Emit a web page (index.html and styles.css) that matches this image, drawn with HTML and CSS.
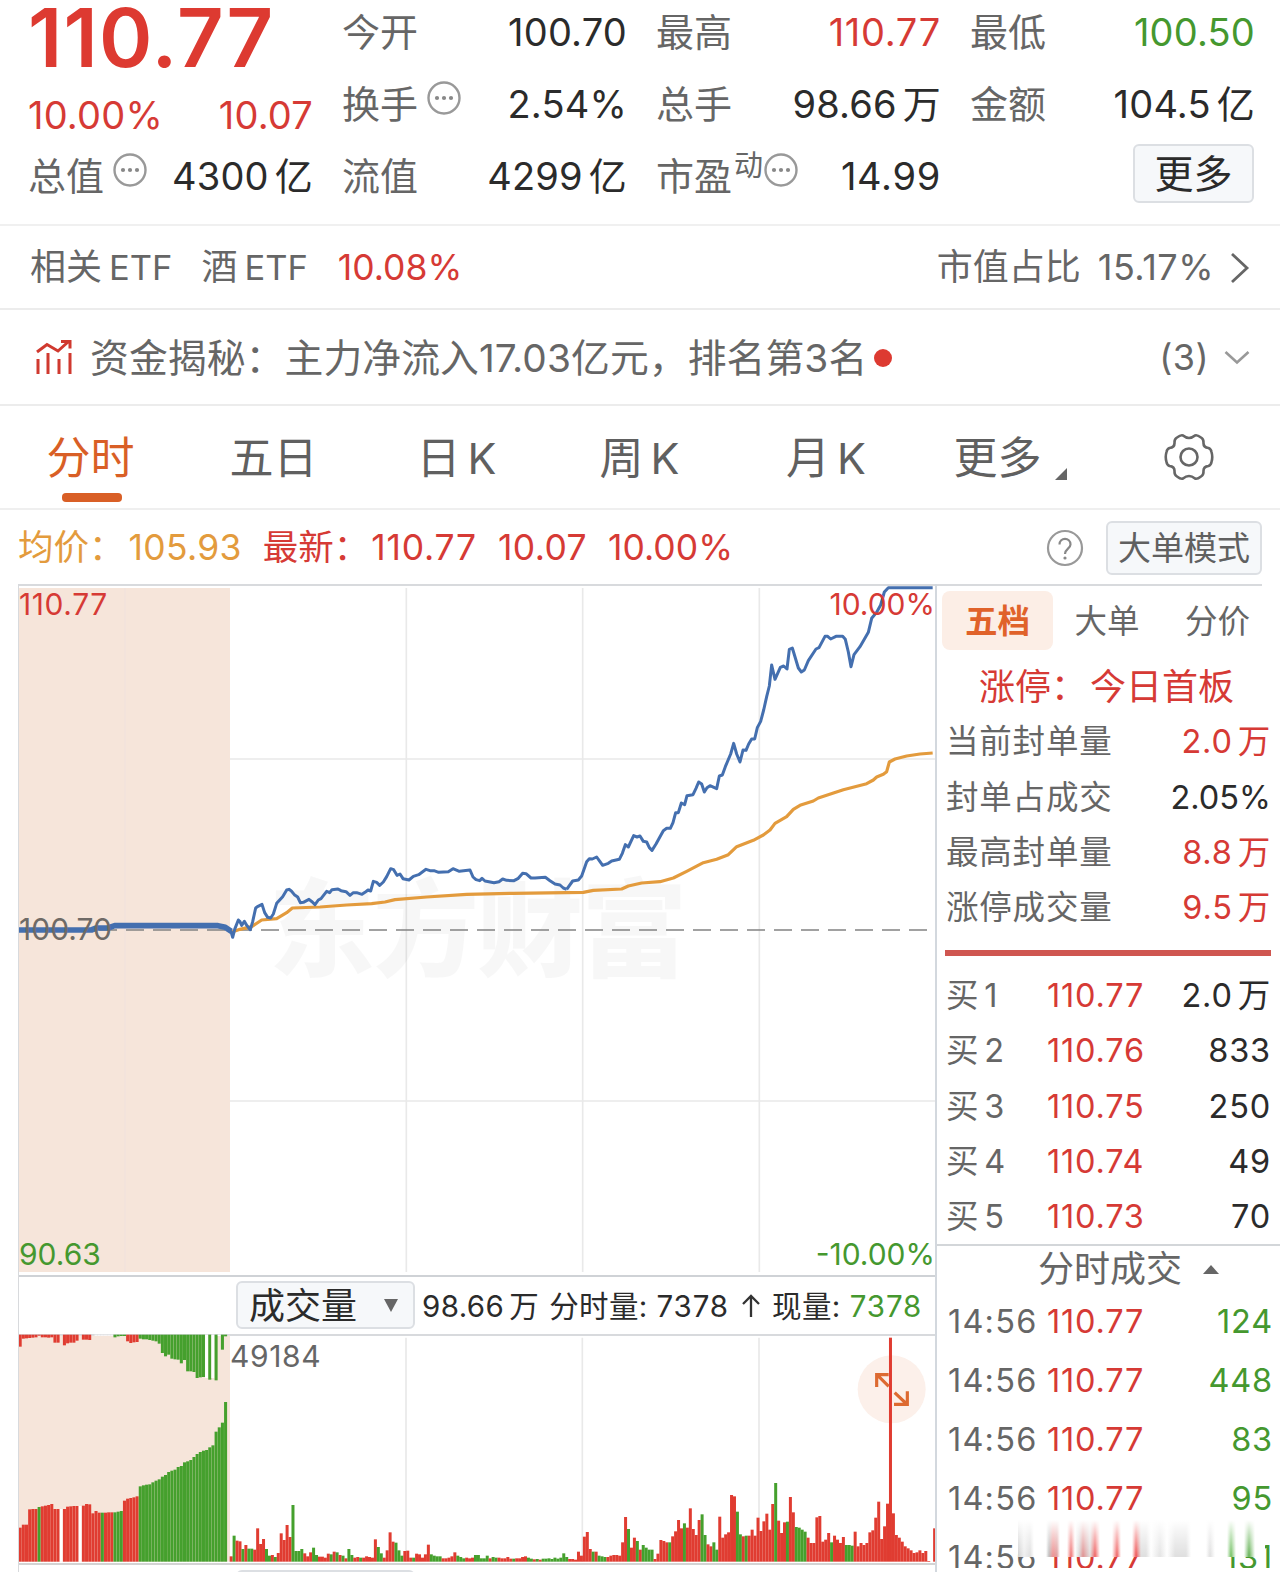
FILE: index.html
```html
<!DOCTYPE html>
<html lang="zh-CN">
<head>
<meta charset="utf-8">
<title>分时行情</title>
<link rel="stylesheet" href="styles.css">
</head>
<body>
<svg width="0" height="0" class="defs">
  <symbol id="dots" viewBox="0 0 34 34"><circle cx="17" cy="17" r="15.5" fill="none" stroke="#999" stroke-width="2.4"/><g fill="#888"><circle cx="10" cy="17" r="2.1"/><circle cx="17" cy="17" r="2.1"/><circle cx="24" cy="17" r="2.1"/></g></symbol>
</svg>
<main class="page">
  <section class="quote">
    <div class="col">
      <div class="price">110.77</div>
      <div class="cell change red"><span>10.00%</span><span>10.07</span></div>
      <div class="cell"><span class="label">总值<svg class="dots"><use href="#dots"/></svg></span><span>4300<i>亿</i></span></div>
    </div>
    <div class="col">
      <div class="cell"><span class="label">今开</span><span>100.70</span></div>
      <div class="cell"><span class="label">换手<svg class="dots"><use href="#dots"/></svg></span><span>2.54%</span></div>
      <div class="cell"><span class="label">流值</span><span>4299<i>亿</i></span></div>
    </div>
    <div class="col">
      <div class="cell"><span class="label">最高</span><span class="red wide">110.77</span></div>
      <div class="cell"><span class="label">总手</span><span>98.66<i>万</i></span></div>
      <div class="cell"><span class="label">市盈<small>动</small><svg class="dots tight"><use href="#dots"/></svg></span><span class="wide">14.99</span></div>
    </div>
    <div class="col">
      <div class="cell"><span class="label">最低</span><span class="green">100.50</span></div>
      <div class="cell"><span class="label">金额</span><span>104.5<i>亿</i></span></div>
      <div class="cell end"><button class="more">更多</button></div>
    </div>
  </section>

  <section class="etf">
    <span>相关<i>ETF</i></span><span class="etf-name">酒<i>ETF</i></span><span class="red pct">10.08%</span>
    <span class="share">市值占比</span><span class="ratio">15.17%</span>
    <svg class="arrow" viewBox="0 0 20 32"><path d="M2 2 17 16 2 30" fill="none" stroke="#666" stroke-width="2.8"/></svg>
  </section>

  <section class="fund">
    <svg class="trend" viewBox="0 0 38 36" fill="none" stroke="#d0392f" stroke-width="3"><path d="M2 12 12 4.500 23 11 33 2M26 1.500h9v7M3 19v15M13 13v21M24 19v15M35 13v21"/></svg>
    <span class="news">资金揭秘：主力净流入17.03亿元，排名第3名</span><b class="dot"></b>
    <span class="count">(3)</span>
    <svg class="down" viewBox="0 0 26 16"><path d="M1.500 2 13 12.500 24.500 2" fill="none" stroke="#999" stroke-width="2.600"/></svg>
  </section>

  <nav class="tabs">
    <span class="on">分时</span><span>五日</span><span>日<i>K</i></span><span>周<i>K</i></span><span class="month">月<i>K</i></span><span class="drop">更多</span>
    <span><svg class="gear" viewBox="-25 -25 50 50" fill="none" stroke="#666" stroke-width="2.600" stroke-linejoin="round"><circle r="8.500"/><path d="M-6-21.500Q0-16.500 6-21.500Q8-22.500 12-19.500Q14.500-18 14.500-15Q14-9.500 19.500-9Q22-8 22.500-5Q24 0 22.500 5Q22 8 19.500 9Q14 9.500 14.500 15Q14.500 18 12 19.500Q8 22.500 6 21.500Q0 16.500-6 21.500Q-8 22.500-12 19.500Q-14.500 18-14.500 15Q-14 9.500-19.500 9Q-22 8-22.500 5Q-24 0-22.500-5Q-22-8-19.500-9Q-14-9.500-14.500-15Q-14.500-18-12-19.500Q-8-22.500-6-21.500Z"/></svg></span>
  </nav>

  <section class="summary">
    <span class="avg">均价：</span><span class="avg v1">105.93</span><span class="red s2">最新：</span><span class="red v2">110.77</span><span class="red v3">10.07</span><span class="red v4">10.00%</span>
    <svg class="help" viewBox="0 0 38 38"><circle cx="19" cy="19" r="17" fill="none" stroke="#999" stroke-width="2.200"/><path d="M13.500 15.500c0-7.500 11-7.500 11 0 0 4-5.500 4.500-5.500 9.500" fill="none" stroke="#888" stroke-width="2.200"/><circle cx="19" cy="29" r="1.600" fill="#888"/></svg>
    <button class="mode">大单模式</button>
  </section>

  <section class="body">
    <div class="left">
      <div class="chart">
        <svg viewBox="0 0 2757 2073" width="919" height="691">
          <rect x="0" y="12" width="636" height="2052" fill="#f6e5da"/>
          <path d="M321 12V2064" stroke="#f2e3dc" stroke-width="4"/>
          <path d="M1165 12V2064M1694 12V2064M2224 12V2064M636 525H2757M636 1551H2757" stroke="#e9e9e9" stroke-width="5" fill="none"/>
          <text class="mark" x="752" y="1153" textLength="1256">东方财富</text>
          <path d="M0 1038H2757" stroke="#828282" stroke-width="5" stroke-dasharray="54 27"/>
          <g fill="none" stroke-linejoin="round">
            <path stroke="#e39b3d" stroke-width="9.500" d="M642 1044 666 1036 701 1028 731 1008 776 1004 806 986 823 972 906 969 986 963 1061 959 1101 954 1131 947 1226 939 1346 931 1486 928 1696 925 1726 919 1811 915 1831 906 1871 897 1926 893 1966 882 2006 862 2056 836 2096 826 2131 812 2156 788 2206 769 2236 753 2256 738 2271 718 2306 698 2326 676 2346 664 2386 651 2401 642 2476 617 2546 599 2566 588 2576 579 2596 571 2606 563 2614 534 2631 525 2666 516 2706 510 2744 507"/>
            <path stroke="#446faf" stroke-width="17" d="M2 1038H220L235 1032H270L290 1025H600L622 1030 640 1042"/>
            <g transform="translate(606 -12)"><path stroke="#446faf" stroke-width="9" d="M25 1048 33 1055 38 1072 44 1048 55 1020 60 1025 65 1036 73 1024 80 1036 91 1049 98 1025 107 984 114 979 126 973 134 998 143 1012 152 1014 160 1002 170 970 188 950 200 930 207 928 214 933 223 944 233 951 241 968 250 967 267 958 277 966 285 974 295 960 303 956 320 934 329 938 336 929 354 927 363 932 378 935 390 946 400 938 410 938 426 943 435 937 444 930 452 933 460 904 470 907 479 916 490 906 500 890 512 866 521 869 531 886 540 882 549 896 567 900 580 889 596 884 618 868 630 872 642 872 656 877 685 875 699 866 718 874 750 870 759 891 768 899 779 902 786 895 795 903 822 908 837 905 848 897 860 901 882 902 895 895 908 880 918 881 933 894 945 894 976 892 990 902 1005 912 1020 915 1030 924 1040 928"/></g>
            <g transform="translate(1626 -12)"><path stroke="#446faf" stroke-width="9" d="M20 928 38 903 55 900 65 888 80 845 88 836 97 837 110 831 120 845 128 856 145 850 155 843 178 838 187 820 196 794 205 801 221 767 231 771 240 768 250 784 260 786 268 803 276 811 288 792 300 770 310 752 320 745 331 745 339 728 347 698 355 698 364 669 374 674 381 647 399 644 408 625 416 606 425 612 433 636 441 623 450 617 470 626 478 588 487 585 496 560 512 522 521 490 530 522 540 546 549 510 558 511 566 492 575 477 584 477 592 443 602 424 611 390 620 350 628 318 635 255 645 298 661 262 671 258 681 267 688 208 697 204 706 234 715 264 724 276 733 270 745 242 768 207 777 203 795 169 803 169 812 177 828 169 848 169 856 178 865 216 873 260 882 224 900 200 925 157 935 115 950 97 962 75 973 36 985 23H1118"/></g>
          </g>
        </svg>
        <span class="tag tl red">110.77</span><span class="tag tr red">10.00%</span><span class="tag ml">100.70</span><span class="tag bl green">90.63</span><span class="tag br green">-10.00%</span>
      </div>
      <div class="volbar">
        <button class="volbtn">成交量<svg viewBox="0 0 14 13"><path d="M0 0H14L7 13Z" fill="#666"/></svg></button>
        <span>98.66<i>万</i></span><span class="g2">分时量: <em>7378</em></span><svg class="up" viewBox="0 0 20 24"><path d="M10 23V2M2 10 10 2 18 10" fill="none" stroke="#333" stroke-width="2.300"/></svg><span>现量:</span><span class="green now">7378</span>
      </div>
      <div class="volume">
        <svg viewBox="55 283 2757 687" width="919" height="229">
          <rect x="55" y="288" width="636" height="678" fill="#f6e5da"/>
          <path d="M1219 294V966M1748 294V966M2278 294V966" stroke="#e9e9e9" stroke-width="5"/>
          <circle cx="2676" cy="449" r="102" fill="#fcf0ea"/>
          <g id="bars"></g>
          <path d="M2631 442V405H2667M2634 407 2667 440M2685 459 2721 493M2723 455V494H2683" fill="none" stroke="#dd6a31" stroke-width="9.500"/>
        </svg>
        <span class="max">49184</span>
      </div>
      <div class="nextbar"><span></span></div>
    </div>

    <aside class="side">
      <div class="subtabs"><b>五档</b><span>大单</span><span>分价</span></div>
      <div class="limit red">涨停：<span>今日首板</span></div>
      <div class="row"><span class="label">当前封单量</span><span class="red">2.0<i>万</i></span></div>
      <div class="row"><span class="label">封单占成交</span><span class="tightnum">2.05%</span></div>
      <div class="row"><span class="label">最高封单量</span><span class="red">8.8<i>万</i></span></div>
      <div class="row"><span class="label">涨停成交量</span><span class="red">9.5<i>万</i></span></div>
      <div class="rule"></div>
      <div class="row bid"><span class="label">买<i>1</i></span><span class="red">110.77</span><span>2.0<i>万</i></span></div>
      <div class="row bid"><span class="label">买<i>2</i></span><span class="red">110.76</span><span>833</span></div>
      <div class="row bid"><span class="label">买<i>3</i></span><span class="red">110.75</span><span>250</span></div>
      <div class="row bid"><span class="label">买<i>4</i></span><span class="red">110.74</span><span>49</span></div>
      <div class="row bid"><span class="label">买<i>5</i></span><span class="red">110.73</span><span>70</span></div>
      <div class="deals">分时成交<svg viewBox="0 0 16 9"><path d="M0 9 8 0 16 9Z" fill="#666"/></svg></div>
      <div class="trades">
        <div class="row trade"><span class="label">14:56</span><span class="red">110.77</span><span class="green">124</span></div>
        <div class="row trade"><span class="label">14:56</span><span class="red">110.77</span><span class="green">448</span></div>
        <div class="row trade"><span class="label">14:56</span><span class="red">110.77</span><span class="green">83</span></div>
        <div class="row trade"><span class="label">14:56</span><span class="red">110.77</span><span class="green">95</span></div>
        <div class="row trade"><span class="label">14:56</span><span class="red">110.77</span><span class="green">131</span></div>
        <div class="smudge"></div>
      </div>
    </aside>
  </section>
</main>
<script src="bars.js"></script>
</body>
</html>
```
FILE: bars.js
```js
// Each entry is colour (r, g, or w for an empty slot) followed by bar height.
const colours = { r: '#e03c31', g: '#45a02d', w: '#ffffff' };
const layer = document.getElementById('bars');

function draw(list, x0, pitch, width, base, down) {
  list.trim().split(/\s+/).forEach((entry, i) => {
    const h = Number(entry.slice(1));
    if (!h) return;
    const bar = document.createElementNS('http://www.w3.org/2000/svg', 'rect');
    bar.setAttribute('x', x0 + pitch * i);
    bar.setAttribute('y', down ? base : base - h);
    bar.setAttribute('width', width);
    bar.setAttribute('height', h);
    bar.setAttribute('fill', colours[entry[0]]);
    layer.appendChild(bar);
  });
}

const auctionMatched = `r102 r111 r111 r157 r158 r158 g164 r166 r168 r170 r173 r158 r158 w158 r158 r165 r166 r167 r167 w167
r168 r173 r172 r145 r152 r147 g147 r147 r148 r148 g148 g150 g152 r183 r189 r191 r193 r196 g226 g229 g231 g232 g238 g243 g247
g255 g260 g269 g273 g276 g284 g287 g298 g301 g305 g314 g323 g329 g333 g335 g343 g349 g390 g403 g417 g479`;
const auctionUnmatched = `r36 r12 r11 r10 r9 r8 r3 r8 r8 r9 r8 r24 r24 w0 r32 r26 r24 r24 r18 w0 r15 r15 r16 w0 w3 w3 w3 w3 w3 w3
g8 g5 g4 g4 r20 r25 r23 r22 g12 g14 g14 g16 g18 g20 g27 g55 g65 g60 g72 g74 g75 g86 g76 g110 g110 g112 g130 g128 g127 w130
g135 w130 g137 w4 g45 g5`;
const traded = `r16 g78 r63 r61 g38 r50 g39 g39 r36 r100 r53 r68 g38 g18 r20 g14 r26 r85 r65 r110 r74 g170 g32 g32 g38 r25 r16 r28
g42 g20 r15 r15 r12 r24 g22 r30 g28 r20 g18 r10 g38 g20 r12 r14 g12 r12 r16 r14 r12 r67 g44 g25 r12 r34 r88 r60 g57 g34 g18 r32
r33 r12 g12 r24 r22 r12 r22 r51 g22 g18 g16 g16 r10 r10 r12 r16 r28 g18 g14 g10 r12 r10 r12 g20 g20 g10 g10 g18 r10 g14 g12 r12
r10 r10 r14 r9 g9 r10 r10 r14 r16 g12 g9 r7 g8 r6 g9 g9 g10 g8 g12 g9 g12 g25 g14 r8 r8 r6 r30 r18 r75 r89 r38 g30 r30 g18 g16
g14 r14 r18 r20 r20 r18 r58 r134 g98 r42 r72 g62 r36 g50 g42 g36 g36 r8 r24 r65 r62 r58 g58 r76 r91 r125 r100 g115 r102 r160 r98
r80 r125 g142 g80 r52 r46 g58 g36 r135 r72 r82 r88 r200 r196 g150 g82 r76 g78 r78 r96 r78 r132 r92 r121 r144 r96 r173 g236 r123
r86 r118 g120 r194 r148 g104 g102 g96 g90 r72 r56 r56 r133 r137 r60 r66 r86 g58 r78 r66 r56 r74 g50 g50 g48 r90 r46 r56 r50
r56 r88 r94 r132 r180 r68 r106 r174 r672 r145 r80 r72 r60 r46 r40 r34 r26 r28 r34 r26 r32 r2 w0 r100`;

draw(auctionMatched, 57, 9.48, 9.1, 966, false);
draw(auctionUnmatched, 57, 9.48, 9.1, 285, true);
draw(traded, 690, 8.83, 9, 966, false);
```
FILE: styles.css
```css
* { box-sizing: border-box; }
body { margin: 0; background: #fff; color: #2b2b2b; font-family: Inter, "Noto Sans CJK SC", sans-serif; line-height: 1.2; }
i, em { font-style: normal; }
button { font-family: inherit; padding: 0; background: #f6f8fa; border: 2px solid #dcdfe3; border-radius: 6px; color: #2b2b2b; }
svg { display: block; flex: none; }
.defs { position: absolute; }
.page { width: 1280px; height: 1572px; overflow: hidden; display: flex; flex-direction: column; }
.page > * { flex: none; }
.red { color: #d63a35; }
.green { color: #45982f; }
.label { color: #666; }

.quote { height: 226px; border-bottom: 2px solid #f0f0f0; padding: 1px 26px 0 28px; display: grid; grid-template-columns: repeat(4, 285px); column-gap: 29px; font-size: 38px; }
.cell { height: 72px; display: flex; justify-content: space-between; align-items: center; white-space: nowrap; }
.cell:first-child { height: 68px; padding-bottom: 4px; }
.cell i { margin-left: 6px; }
.cell > span { letter-spacing: .2px; }
.cell .label { display: flex; align-items: center; letter-spacing: 0; }
.cell > .wide { letter-spacing: .7px; }
.label small { font-size: 29px; margin: -22px 0 0 2px; }
.dots { width: 34px; height: 34px; margin: -15px 0 0 9px; }
.dots.tight { margin-left: 1px; }
.price { height: 76px; margin: -1px 0 5px; line-height: 76px; font-size: 81px; font-weight: 600; color: #dd3a31; letter-spacing: 1.3px; }
.change { height: 69px; }
.change + .cell { height: 54px; }
.cell.end { justify-content: flex-end; }
.more { width: 121px; height: 59px; font-size: 39px; line-height: 55px; margin: -8px 1px 0 0; }

.etf { height: 84px; border-bottom: 2px solid #ececec; padding: 2px 30px 0; display: flex; align-items: center; font-size: 36px; color: #666; white-space: nowrap; }
.etf i { margin-left: 7px; font-size: 34.5px; }
.etf-name { margin-left: 29px; }
.pct { margin-left: 30px; font-size: 35.5px; }
.share { margin-left: auto; }
.ratio { margin-left: 17px; letter-spacing: .5px; }
.arrow { width: 20px; height: 32px; margin-left: 16px; }

.fund { height: 96px; border-bottom: 2px solid #ececec; padding: 2px 30px 0 35px; display: flex; align-items: center; font-size: 38.8px; color: #666; white-space: nowrap; }
.trend { width: 38px; height: 36px; margin: -1px 17px 0 0; }
.news { width: 776px; letter-spacing: .1px; }
.dot { width: 18px; height: 18px; border-radius: 50%; background: #dd3a31; margin: -1px 0 0 8px; }
.count { margin-left: auto; font-size: 36px; letter-spacing: .4px; }
.down { width: 26px; height: 16px; margin-left: 15px; }

.tabs { height: 104px; border-bottom: 2px solid #efefef; display: grid; grid-template-columns: repeat(7, 183px); align-items: center; justify-items: center; font-size: 44px; color: #606060; }
.tabs > span { position: relative; padding-top: 2px; margin-left: -2px; }
.tabs i { margin-left: 7px; font-size: 43px; }
.tabs .on { color: #d95f26; }
.tabs .on::after { content: ""; position: absolute; left: 50%; top: 63px; width: 60px; height: 9px; margin-left: -29px; border-radius: 4px; background: #d95f26; }
.tabs .month { margin-left: 5px; }
.drop { left: -8px; }
.drop::after { content: ""; position: absolute; right: -25px; bottom: 4px; border-style: solid; border-width: 0 0 12px 12px; border-color: transparent transparent #666; }
.gear { width: 50px; height: 50px; margin-top: -2px; }

.summary { height: 74px; padding: 2px 18px 0; display: flex; align-items: center; font-size: 35.5px; white-space: nowrap; }
.avg { color: #e39b3d; }
.v1 { margin-left: 4px; letter-spacing: .3px; }
.v2 { margin-left: 2px; letter-spacing: .8px; }
.s2, .v3, .v4 { margin-left: 21px; }
.v3 { letter-spacing: .4px; }
.help { width: 38px; height: 38px; margin-left: auto; }
.mode { width: 156px; height: 54px; margin: -1px 0 0 22px; font-size: 33px; line-height: 50px; color: #606060; }

.body { display: grid; grid-template-columns: 919px 343px; margin-left: 18px; height: 988px; }
.left { height: 988px; overflow: hidden; border-left: 1px solid #d8dadd; border-right: 2px solid #d3d8de; }
.chart { position: relative; height: 693px; border-top: 2px solid #d8dadd; border-bottom: 2px solid #cfd2d6; }
.chart > svg { margin: -2px 0 0 -1px; }
.mark { font: 900 318px "Noto Sans CJK SC", sans-serif; fill: #000; fill-opacity: .03; }
.tag { position: absolute; font-size: 30px; line-height: 36px; }
.tl { left: 0; top: 0; letter-spacing: .6px; }
.tr { right: 0; top: 0; }
.ml { left: 0; top: 325px; color: #6f6a66; }
.bl { left: 0; bottom: 3px; }
.br { right: 0; bottom: 3px; }
.volbar { height: 57px; display: flex; align-items: center; padding-left: 217px; font-size: 29.5px; letter-spacing: .4px; white-space: nowrap; }
.volbar > span { padding-top: 2px; }
.volbar i { margin-left: 5px; }
.volbar em, .now { letter-spacing: .9px; }
.volbtn { width: 179px; height: 48px; margin: -1px 7px 0 0; font-size: 36px; line-height: 40px; display: flex; align-items: center; justify-content: space-between; padding: 2px 15px 0 11px; }
.volbtn svg { width: 14px; height: 13px; margin-top: -2px; }
.g2 { margin-left: 10px; }
.up { width: 20px; height: 24px; margin: 0 11px 0 12px; }
.now { margin-left: 9px; }
.volume { position: relative; height: 231px; border-top: 2px solid #d8dadd; border-bottom: 2px solid #d3d3d3; }
.volume > svg { margin: -2px 0 0 -1px; }
.max { position: absolute; left: 211px; top: 2px; font-size: 30px; line-height: 36px; letter-spacing: .6px; color: #666; }
.nextbar { padding: 5px 0 0 217px; }
.nextbar span { display: block; width: 179px; height: 48px; background: #f6f8fa; border: 2px solid #dcdfe3; border-radius: 6px; }

.side { font-size: 32.5px; letter-spacing: .8px; white-space: nowrap; height: 984px; overflow: hidden; }
.subtabs { height: 68px; margin-right: 18px; border-top: 2px solid #d8dadd; padding: 5px 0 0 5px; display: flex; line-height: 62px; color: #666; letter-spacing: 0; }
.subtabs b { flex: none; width: 111px; height: 59px; border-radius: 8px; background: #fceee6; color: #e0622a; text-align: center; }
.subtabs span { flex: none; width: 108px; text-align: center; }
.subtabs span + span { width: 113px; }
.limit { height: 61px; line-height: 70px; font-size: 36px; letter-spacing: 0; padding-left: 42px; }
.limit span { margin-left: 3px; }
.row { height: 55.4px; display: flex; align-items: center; justify-content: space-between; padding: 2px 9px 0 9px; }
.row i { margin-left: 5px; }
.tightnum { letter-spacing: 0; }
.rule { height: 6px; margin: 15.4px 9px 10.600px 8px; background: #cf5650; }
.bid, .trade { display: grid; grid-template-columns: 101px 1fr auto; }
.deals { height: 48px; border-top: 2px solid #d3d6d9; padding-top: 2px; display: flex; align-items: center; font-size: 36px; letter-spacing: 0; color: #666; padding-left: 101px; }
.deals svg { width: 16px; height: 9px; margin-left: 21px; }
.trades { position: relative; }
.trade { height: 58.8px; padding-right: 7px; padding-left: 11px; grid-template-columns: 99px 1fr auto; }
.trade .label { letter-spacing: 1.2px; }
.smudge { position: absolute; left: 81px; top: 228px; width: 247px; height: 37px; border-top-right-radius: 8px;
  background: linear-gradient(to bottom, #fff 0, rgba(255,255,255,.6) 40%, rgba(255,255,255,.1) 95%),
    linear-gradient(to right, #ccc 0, #eee 6px, #ddd 12px, #fff 16px, #fff 28px, #bbb 31px, #e88 35px, #d99 39px, #fff 42px, #fff 49px, #e66 53px, #fff 57px, #d8d8d8 61px, #d88 65px, #ddd 72px, #e55 77px, #fff 82px, #fff 94px, #e55 99px, #fff 103px, #fff 114px, #e44 118px, #ddd 123px, #ddd 128px, #fff 133px, #e2e2e2 142px, #fff 149px, #ddd 157px, #ddd 168px, #fff 173px, #fff 188px, #ddd 192px, #fff 197px, #fff 209px, #6b5 213px, #fff 218px, #fff 226px, #5a4 231px, #fff 237px, #fff 249px); }
```
